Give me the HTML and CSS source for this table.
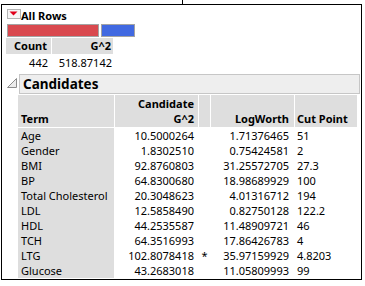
FILE: index.html
```html
<!DOCTYPE html>
<html>
<head>
<meta charset="utf-8">
<link rel="stylesheet" href="styles.css">
</head>
<body>
<div class="tick"></div>
<div class="frame">
  <div class="title">
    <svg class="menu-icon" width="14" height="11" viewBox="0 0 14 11">
      <rect x="0.5" y="0.5" width="13" height="9" fill="#f6f6f6" stroke="#b4b4b4"/>
      <polygon points="2.5,2.5 10.5,2.5 6.5,6.5" fill="#e0001b"/>
    </svg>
    <span class="title-text">All Rows</span>
  </div>
  <div class="bars"><span class="bar red"></span><span class="bar blue"></span></div>
  <table class="summary">
    <tr><th class="c1">Count</th><th class="c2">G^2</th></tr>
    <tr><td class="c1">442</td><td class="c2">518.87142</td></tr>
  </table>
  <div class="outline">
    <svg class="disc" width="16" height="20" viewBox="0 0 16 20">
      <polygon points="4.5,13.5 13.5,13.5 13.5,4.5" fill="#ececec" stroke="#8c8c8c"/>
    </svg>
    <div class="outline-head">Candidates</div>
  </div>
  <table class="cand">
    <colgroup><col class="w-term"><col class="w-g2"><col class="w-star"><col class="w-lw"><col class="w-cut"></colgroup>
    <thead>
      <tr><th class="term">Term</th><th class="num">Candidate<br>G^2</th><th class="star"></th><th class="lw">LogWorth</th><th class="cut">Cut Point</th></tr>
    </thead>
    <tbody>
      <tr><td class="term">Age</td><td class="num">10.5000264</td><td class="star"></td><td class="lw">1.71376465</td><td class="cut">51</td></tr>
      <tr><td class="term">Gender</td><td class="num">1.8302510</td><td class="star"></td><td class="lw">0.75424581</td><td class="cut">2</td></tr>
      <tr><td class="term">BMI</td><td class="num">92.8760803</td><td class="star"></td><td class="lw">31.25572705</td><td class="cut">27.3</td></tr>
      <tr><td class="term">BP</td><td class="num">64.8300680</td><td class="star"></td><td class="lw">18.98689929</td><td class="cut">100</td></tr>
      <tr><td class="term">Total Cholesterol</td><td class="num">20.3048623</td><td class="star"></td><td class="lw">4.01316712</td><td class="cut">194</td></tr>
      <tr><td class="term">LDL</td><td class="num">12.5858490</td><td class="star"></td><td class="lw">0.82750128</td><td class="cut">122.2</td></tr>
      <tr><td class="term">HDL</td><td class="num">44.2535587</td><td class="star"></td><td class="lw">11.48909721</td><td class="cut">46</td></tr>
      <tr><td class="term">TCH</td><td class="num">64.3516993</td><td class="star"></td><td class="lw">17.86426783</td><td class="cut">4</td></tr>
      <tr><td class="term">LTG</td><td class="num">102.8078418</td><td class="star">*</td><td class="lw">35.97159929</td><td class="cut">4.8203</td></tr>
      <tr><td class="term">Glucose</td><td class="num">43.2683018</td><td class="star"></td><td class="lw">11.05809993</td><td class="cut">99</td></tr>
    </tbody>
  </table>
</div>
</body>
</html>
```

FILE: styles.css
```css
* { box-sizing: border-box; }
html, body { margin: 0; padding: 0; background: #fff; }
body {
  font-family: "Noto Sans", "Segoe UI", sans-serif;
  font-size: 11px;
  color: #000;
  width: 365px;
  height: 286px;
  overflow: hidden;
}
.tick { width: 1px; height: 4px; background: #000; margin-left: 182px; }
.frame {
  width: 361px;
  height: 276px;
  margin-left: 1px;
  border: 1px solid #000;
  padding-left: 1px;
}
.title {
  display: flex;
  align-items: flex-start;
  margin: 4px 0 0 4px;
  height: 14px;
}
.menu-icon { display: block; flex: none; }
.title-text { font-weight: bold; font-size: 11px; line-height: 14px; }
.bars { display: flex; gap: 2px; margin: 1px 0 0 4px; height: 13px; }
.bar { display: block; height: 13px; border: 1px solid #a3a3a3; }
.bar.red { width: 92px; background: #d9494f; }
.bar.blue { width: 34px; background: #4169e1; }

table { border-collapse: separate; border-spacing: 0; table-layout: fixed; }
th, td { padding: 0; white-space: nowrap; }

.summary { margin: 1px 0 0 3px; width: 108px; }
.summary th {
  background: #dedede;
  font-weight: bold;
  height: 16px;
  line-height: 16px;
  text-align: right;
  border-right: 1px solid #fff;
  border-bottom: 1px solid #fff;
}
.summary td { line-height: 16px; height: 16px; text-align: right; }
.summary .c1 { width: 46px; padding-right: 4px; }
.summary .c2 { width: 62px; padding-right: 2px; }
.summary td.c1 { padding-right: 4px; }

.outline { display: flex; margin-top: 3px; height: 20px; }
.disc { display: block; flex: none; }
.outline-head {
  width: 341px;
  height: 20px;
  border: 1px solid #c6c6c6;
  background: #eeeeee;
  font-weight: bold;
  font-size: 13.5px;
  line-height: 18px;
  padding-left: 3px;
}

.cand { margin: 1px 0 0 15px; width: 339px; }
.w-term { width: 97px; }
.w-g2 { width: 84px; }
.w-star { width: 12px; }
.w-lw { width: 84px; }
.w-cut { width: 62px; }
.cand th {
  background: #dedede;
  font-weight: bold;
  height: 33px;
  line-height: 15px;
  vertical-align: bottom;
  padding-bottom: 1px;
  border-right: 1px solid #fff;
  border-bottom: 1px solid #fff;
}
.cand th.cut { border-right: 0; }
.cand td { height: 15px; line-height: 15px; }
.cand .term { text-align: left; padding-left: 3px; }
.cand td.term { background: #dedede; border-right: 1px solid #fff; }
.cand .num { text-align: right; padding-right: 4px; }
.cand td.num { border-right: 1px solid #fff; }
.cand .star { text-align: center; }
.cand td.star { border-right: 1px solid #fff; }
.cand .lw { text-align: right; padding-right: 5px; }
.cand td.lw { border-right: 1px solid #fff; }
.cand .cut { text-align: left; padding-left: 2px; }
```
